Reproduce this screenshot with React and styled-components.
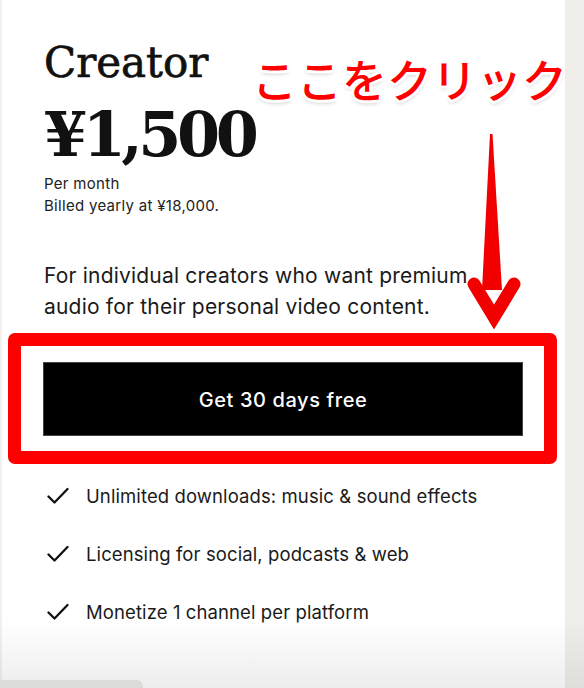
import React from "react";
import styled, { createGlobalStyle } from "styled-components";

const features = [
  "Unlimited downloads: music & sound effects",
  "Licensing for social, podcasts & web",
  "Monetize 1 channel per platform",
];

const App = () => {
  return (
    <Page>
      <GlobalStyle />
      <EdgeStrip />
      <Card>
        <Title>Creator</Title>
        <Price>¥1,500</Price>
        <Meta>
          Per month
          <br />
          Billed yearly at ¥18,000.
        </Meta>
        <Description>
          For individual creators who want premium
          <br />
          audio for their personal video content.
        </Description>

        <Highlight>
          <CtaButton>Get 30 days free</CtaButton>
        </Highlight>

        <Features>
          {features.map((f, i) => (
            <Feature key={i}>
              <CheckIcon />
              <span>{f}</span>
            </Feature>
          ))}
        </Features>

        <Callout>ここをクリック</Callout>
        <Arrow width="66" height="210" viewBox="0 0 66 210">
          <path d="M30 6 L32.5 6 L42 162 L22 162 Z" fill="#f20000" />
          <path
            d="M14 156 L34 189 L54 156"
            fill="none"
            stroke="#f20000"
            strokeWidth="13"
            strokeLinecap="round"
            strokeLinejoin="miter"
          />
        </Arrow>
      </Card>
      <Gutter />
      <BottomFade />
      <ScrollThumb />
    </Page>
  );
};

const CheckIcon = () => (
  <CheckSvg width="22" height="18" viewBox="0 0 22 18">
    <path d="M1.5 9.5 L7.5 15.5 L20.5 2" fill="none" stroke="#111" strokeWidth="2.3" strokeLinecap="round" strokeLinejoin="round" />
  </CheckSvg>
);

const GlobalStyle = createGlobalStyle`
  body {
    margin: 0;
    font-family: Inter, "Noto Sans", sans-serif;
    color: #141414;
  }
`;

const Page = styled.div`
  position: relative;
  display: flex;
  height: 688px;
  overflow: hidden;
  background: #efeeea;
`;

const EdgeStrip = styled.div`
  width: 2px;
  flex-shrink: 0;
  background: #f2f1ed;
`;

const Card = styled.div`
  position: relative;
  box-sizing: border-box;
  width: 563px;
  flex-shrink: 0;
  padding: 38px 42px 0;
  background: #fff;
`;

const Gutter = styled.div`
  flex: 1;
  background: #efeeea;
`;

const Title = styled.h1`
  margin: 0;
  font-family: "DejaVu Serif", "Liberation Serif", serif;
  font-weight: normal;
  font-size: 42px;
  line-height: 50px;
  color: #111;
  -webkit-text-stroke: 0.7px #111;
`;

const Price = styled.div`
  margin-top: 16px;
  font-family: "DejaVu Serif", "Liberation Serif", serif;
  font-weight: bold;
  font-size: 62px;
  line-height: 62px;
  letter-spacing: -4.5px;
  color: #111;
`;

const Meta = styled.p`
  margin: 7px 0 0;
  font-size: 15px;
  line-height: 22px;
  letter-spacing: 0.3px;
  color: #222;
`;

const Description = styled.p`
  margin: 43px 0 0;
  font-size: 21px;
  line-height: 31px;
  letter-spacing: 0.2px;
  color: #1a1a1a;
`;

const Highlight = styled.div`
  margin: 11px -34px 0 -36px;
  padding: 16px 21px 15px 22px;
  border: 13px solid #ff0000;
  border-radius: 7px;
`;

const CtaButton = styled.button`
  display: block;
  width: 100%;
  height: 74px;
  padding-top: 3px;
  border: 1px solid #444;
  background: #000;
  color: #fff;
  font-family: Inter, sans-serif;
  font-size: 20px;
  font-weight: 500;
  letter-spacing: 0.6px;
  cursor: pointer;
`;

const Features = styled.ul`
  list-style: none;
  margin: 20px 0 0;
  padding: 0;
  display: flex;
  flex-direction: column;
  gap: 34px;
`;

const Feature = styled.li`
  display: flex;
  align-items: center;
  gap: 17px;
  height: 24px;
  font-size: 18.5px;
  line-height: 24px;
  letter-spacing: 0.1px;
  color: #1a1a1a;
`;

const CheckSvg = styled.svg`
  flex-shrink: 0;
  margin-left: 3px;
`;

const Callout = styled.div`
  position: absolute;
  left: 250px;
  top: 56px;
  font-family: "Noto Sans CJK JP", sans-serif;
  font-weight: 500;
  font-size: 45px;
  line-height: 45px;
  color: #ff0000;
  white-space: nowrap;
  text-shadow:
    2px 0 0 #fff, -2px 0 0 #fff, 0 2px 0 #fff, 0 -2px 0 #fff,
    2px 2px 0 #fff, -2px -2px 0 #fff, 2px -2px 0 #fff, -2px 2px 0 #fff,
    3px 0 0 #fff, -3px 0 0 #fff, 0 3px 0 #fff, 0 -3px 0 #fff,
    0 3px 4px rgba(0, 0, 0, 0.25);
`;

const Arrow = styled.svg`
  position: absolute;
  left: 458px;
  top: 128px;
`;

const BottomFade = styled.div`
  position: absolute;
  left: 0;
  right: 0;
  bottom: 0;
  height: 70px;
  background: linear-gradient(rgba(0, 0, 0, 0), rgba(0, 0, 0, 0.07));
  pointer-events: none;
`;

const ScrollThumb = styled.div`
  position: absolute;
  left: 0;
  bottom: 0;
  width: 143px;
  height: 8px;
  background: #dcdcd9;
  border-top-right-radius: 6px;
`;

export default App;
